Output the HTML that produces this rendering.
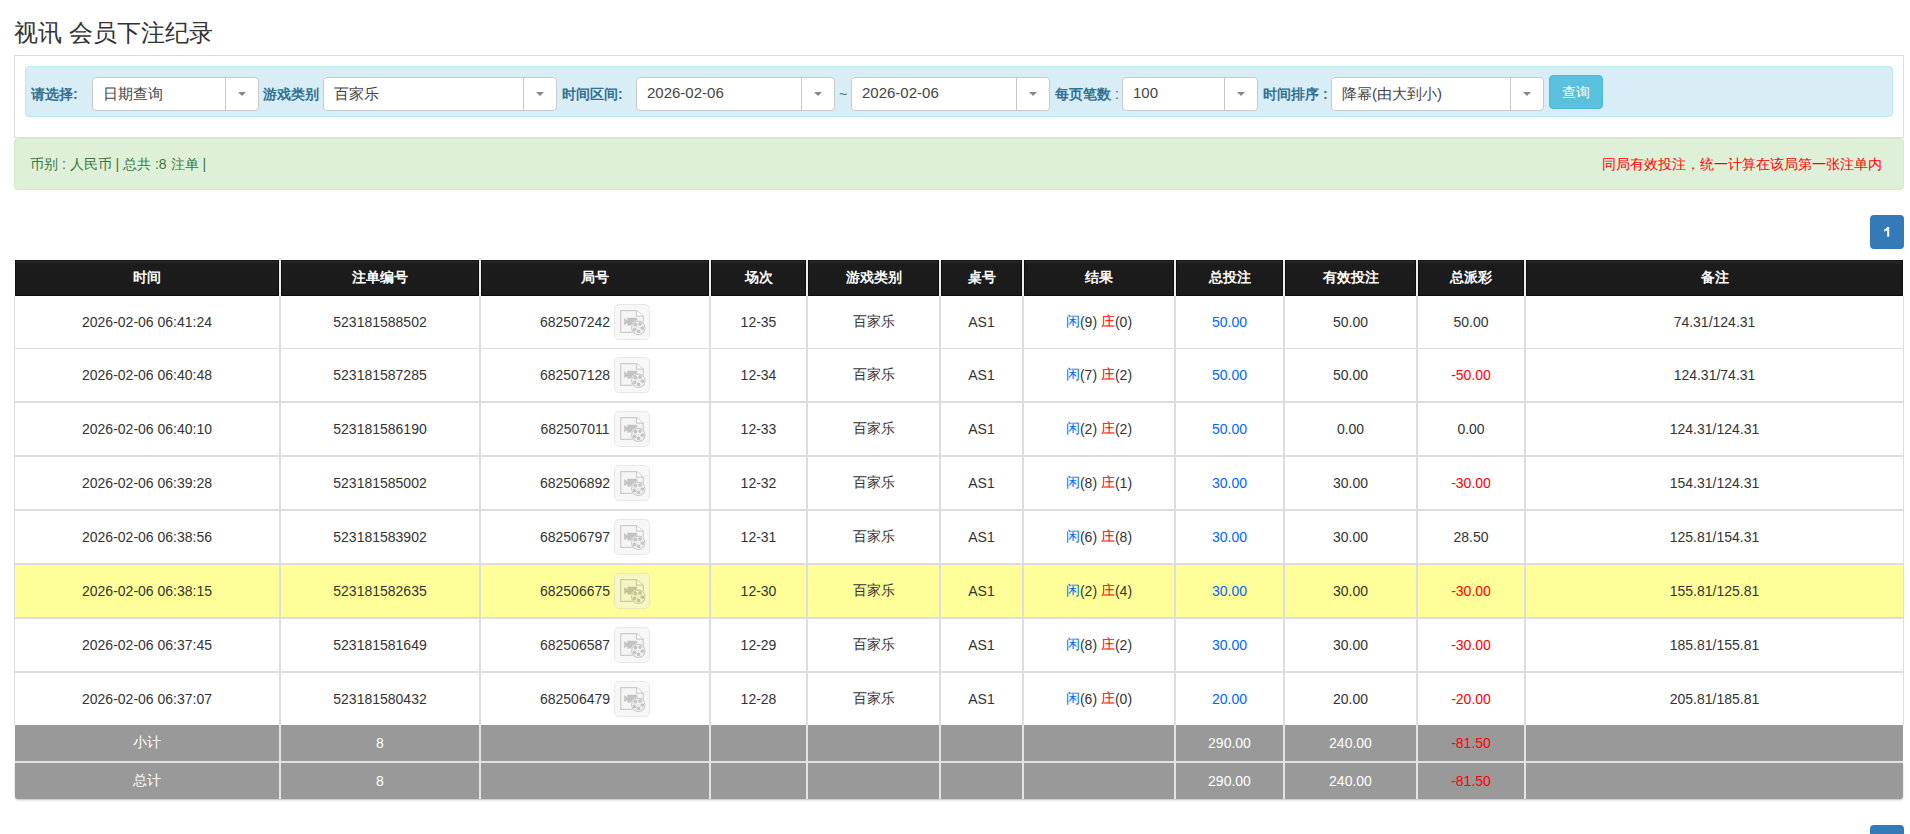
<!DOCTYPE html>
<html><head><meta charset="utf-8">
<style>
*{box-sizing:border-box}
html,body{margin:0;padding:0;background:#fff;width:1910px;height:834px;overflow:hidden}
body{font-family:"Liberation Sans",sans-serif;font-size:14px;color:#333;position:relative}
.abs{position:absolute}
.title{position:absolute;left:14px;top:17px;font-size:24px;line-height:32px;color:#333;white-space:nowrap}
.panel{position:absolute;left:14px;top:55px;width:1890px;height:83px;border:1px solid #ddd;border-bottom-color:#ddd}
.info{position:absolute;left:25px;top:66px;width:1868px;height:51px;background:#d9edf7;border:1px solid #bce8f1;border-radius:4px}
.lbl{position:absolute;top:85px;line-height:18px;font-weight:bold;color:#31708f;white-space:nowrap;font-size:14px}
.sel{position:absolute;top:77px;height:34px;background:#fff;border:1px solid #c9c9c9;border-radius:4px}
.sel .tx{position:absolute;left:10px;top:7px;line-height:18px;font-size:15px;color:#444;white-space:nowrap}
.sel .sp{position:absolute;top:0;bottom:0;width:1px;background:#c9c9c9}
.sel .ar{position:absolute;top:14px;width:0;height:0;border-left:4px solid transparent;border-right:4px solid transparent;border-top:4px solid #888}
.btn{position:absolute;left:1549px;top:75px;width:54px;height:34px;background:#5bc0de;border:1px solid #46b8da;border-radius:4px;color:#fff;font-size:14px;line-height:32px;text-align:center}
.ok{position:absolute;left:14px;top:138px;width:1890px;height:52px;background:#dff0d8;border:1px solid #d6e9c6;border-radius:4px}
.ok .l{position:absolute;left:15px;top:16px;line-height:18px;color:#3c763d;white-space:nowrap}
.ok .r{position:absolute;right:21px;top:16px;line-height:18px;color:#f00;white-space:nowrap}
.pg{position:absolute;left:1870px;width:34px;height:34px;background:#337ab7;border-radius:4px;color:#fff;font-size:14px;text-align:center;line-height:34px;-webkit-text-stroke:0.4px #fff}
.c{position:absolute;display:flex;align-items:center;justify-content:center;white-space:nowrap}
.h{color:#fff;font-weight:bold;font-size:14px}
.f{color:#fff;font-size:14px}
.bl{color:#0066ff}.rd{color:#ff0000}
.ic{display:inline-block;width:36px;height:36px;margin-left:4px;border:1px solid #d3d3d3;border-radius:5px;background:#f1f1f1;position:relative;opacity:.5}
.ic svg{position:absolute;left:-1px;top:-1px}
</style></head><body>

<div class="title">视讯 会员下注纪录</div>
<div class="panel"></div><div class="info"></div>
<div class="lbl" style="left:31px">请选择:</div>
<div class="lbl" style="left:263px">游戏类别</div>
<div class="lbl" style="left:562px">时间区间:</div>
<div class="lbl" style="left:1055px">每页笔数 <span style="font-weight:normal">:</span></div>
<div class="lbl" style="left:1263px">时间排序 :</div>
<div class="sel" style="left:92px;width:167px"><div class="tx">日期查询</div><div class="sp" style="left:132px"></div><div class="ar" style="left:145px"></div></div>
<div class="sel" style="left:323px;width:234px"><div class="tx">百家乐</div><div class="sp" style="left:199px"></div><div class="ar" style="left:212px"></div></div>
<div class="sel" style="left:636px;width:199px"><div class="tx" style="top:6px">2026-02-06</div><div class="sp" style="left:164px"></div><div class="ar" style="left:177px"></div></div>
<div class="sel" style="left:851px;width:199px"><div class="tx" style="top:6px">2026-02-06</div><div class="sp" style="left:164px"></div><div class="ar" style="left:177px"></div></div>
<div class="sel" style="left:1122px;width:136px"><div class="tx" style="top:6px">100</div><div class="sp" style="left:101px"></div><div class="ar" style="left:114px"></div></div>
<div class="sel" style="left:1331px;width:213px"><div class="tx">降幂(由大到小)</div><div class="sp" style="left:178px"></div><div class="ar" style="left:191px"></div></div>
<div class="abs" style="left:839px;top:85px;line-height:18px;color:#31708f;font-size:14px">~</div>
<div class="btn">查询</div>
<div class="ok"><div class="l">币别 : 人民币 | 总共 :8 注单 |</div><div class="r">同局有效投注，统一计算在该局第一张注单内</div></div>
<div class="pg" style="top:215px"><svg width="34" height="34" style="position:absolute;left:0;top:0"><path d="M17.2 12H19.2V21.8H17.2V15.2Q16 16.1 14.1 16.5V14.7Q16.3 13.9 17.2 12Z" fill="#fff"/></svg></div>
<div class="pg" style="top:825px"><svg width="34" height="34" style="position:absolute;left:0;top:0"><path d="M17.2 12H19.2V21.8H17.2V15.2Q16 16.1 14.1 16.5V14.7Q16.3 13.9 17.2 12Z" fill="#fff"/></svg></div>
<div class="abs" style="left:14px;top:296px;width:1px;height:429px;background:#ddd"></div>
<div class="abs" style="left:1903px;top:296px;width:1px;height:429px;background:#ddd"></div>
<div class="abs" style="left:15px;top:260px;width:1888px;height:36px;background:#1b1b1b"></div>
<div class="abs" style="left:15px;top:296px;width:1888px;height:52px;background:#fff"></div>
<div class="abs" style="left:14px;top:348px;width:1890px;height:1px;background:#ddd"></div>
<div class="abs" style="left:15px;top:349px;width:1888px;height:52px;background:#fff"></div>
<div class="abs" style="left:14px;top:401px;width:1890px;height:2px;background:#ddd"></div>
<div class="abs" style="left:15px;top:403px;width:1888px;height:52px;background:#fff"></div>
<div class="abs" style="left:14px;top:455px;width:1890px;height:2px;background:#ddd"></div>
<div class="abs" style="left:15px;top:457px;width:1888px;height:52px;background:#fff"></div>
<div class="abs" style="left:14px;top:509px;width:1890px;height:2px;background:#ddd"></div>
<div class="abs" style="left:15px;top:511px;width:1888px;height:52px;background:#fff"></div>
<div class="abs" style="left:14px;top:563px;width:1890px;height:2px;background:#ddd"></div>
<div class="abs" style="left:15px;top:565px;width:1888px;height:52px;background:#ffff99"></div>
<div class="abs" style="left:14px;top:617px;width:1890px;height:2px;background:#ddd"></div>
<div class="abs" style="left:15px;top:619px;width:1888px;height:52px;background:#fff"></div>
<div class="abs" style="left:14px;top:671px;width:1890px;height:2px;background:#ddd"></div>
<div class="abs" style="left:15px;top:673px;width:1888px;height:52px;background:#fff"></div>
<div class="abs" style="left:15px;top:725px;width:1888px;height:36px;background:#999"></div>
<div class="abs" style="left:15px;top:761px;width:1888px;height:2px;background:#e3e3e3"></div>
<div class="abs" style="left:15px;top:763px;width:1888px;height:36px;background:#999;border-radius:0 0 3px 3px;box-shadow:0 1px 2px rgba(0,0,0,.25)"></div>
<div class="abs" style="left:279px;top:260px;width:2px;height:36px;background:#eee"></div>
<div class="abs" style="left:279px;top:296px;width:2px;height:429px;background:#ddd"></div>
<div class="abs" style="left:279px;top:725px;width:2px;height:74px;background:#e3e3e3"></div>
<div class="abs" style="left:479px;top:260px;width:2px;height:36px;background:#eee"></div>
<div class="abs" style="left:479px;top:296px;width:2px;height:429px;background:#ddd"></div>
<div class="abs" style="left:479px;top:725px;width:2px;height:74px;background:#e3e3e3"></div>
<div class="abs" style="left:709px;top:260px;width:2px;height:36px;background:#eee"></div>
<div class="abs" style="left:709px;top:296px;width:2px;height:429px;background:#ddd"></div>
<div class="abs" style="left:709px;top:725px;width:2px;height:74px;background:#e3e3e3"></div>
<div class="abs" style="left:806px;top:260px;width:2px;height:36px;background:#eee"></div>
<div class="abs" style="left:806px;top:296px;width:2px;height:429px;background:#ddd"></div>
<div class="abs" style="left:806px;top:725px;width:2px;height:74px;background:#e3e3e3"></div>
<div class="abs" style="left:939px;top:260px;width:2px;height:36px;background:#eee"></div>
<div class="abs" style="left:939px;top:296px;width:2px;height:429px;background:#ddd"></div>
<div class="abs" style="left:939px;top:725px;width:2px;height:74px;background:#e3e3e3"></div>
<div class="abs" style="left:1022px;top:260px;width:2px;height:36px;background:#eee"></div>
<div class="abs" style="left:1022px;top:296px;width:2px;height:429px;background:#ddd"></div>
<div class="abs" style="left:1022px;top:725px;width:2px;height:74px;background:#e3e3e3"></div>
<div class="abs" style="left:1174px;top:260px;width:2px;height:36px;background:#eee"></div>
<div class="abs" style="left:1174px;top:296px;width:2px;height:429px;background:#ddd"></div>
<div class="abs" style="left:1174px;top:725px;width:2px;height:74px;background:#e3e3e3"></div>
<div class="abs" style="left:1283px;top:260px;width:2px;height:36px;background:#eee"></div>
<div class="abs" style="left:1283px;top:296px;width:2px;height:429px;background:#ddd"></div>
<div class="abs" style="left:1283px;top:725px;width:2px;height:74px;background:#e3e3e3"></div>
<div class="abs" style="left:1416px;top:260px;width:2px;height:36px;background:#eee"></div>
<div class="abs" style="left:1416px;top:296px;width:2px;height:429px;background:#ddd"></div>
<div class="abs" style="left:1416px;top:725px;width:2px;height:74px;background:#e3e3e3"></div>
<div class="abs" style="left:1524px;top:260px;width:2px;height:36px;background:#eee"></div>
<div class="abs" style="left:1524px;top:296px;width:2px;height:429px;background:#ddd"></div>
<div class="abs" style="left:1524px;top:725px;width:2px;height:74px;background:#e3e3e3"></div>
<div class="abs" style="left:15px;top:260px;width:264px;height:36px;border:1px solid #0e0e0e;border-top:0;background:linear-gradient(#161616 0,#161616 1px,#2a2a2a 1px,#1c1c1c 4px,#1b1b1b)"></div>
<div class="c h" style="left:15px;top:260px;width:264px;height:36px">时间</div>
<div class="abs" style="left:281px;top:260px;width:198px;height:36px;border:1px solid #0e0e0e;border-top:0;background:linear-gradient(#161616 0,#161616 1px,#2a2a2a 1px,#1c1c1c 4px,#1b1b1b)"></div>
<div class="c h" style="left:281px;top:260px;width:198px;height:36px">注单编号</div>
<div class="abs" style="left:481px;top:260px;width:228px;height:36px;border:1px solid #0e0e0e;border-top:0;background:linear-gradient(#161616 0,#161616 1px,#2a2a2a 1px,#1c1c1c 4px,#1b1b1b)"></div>
<div class="c h" style="left:481px;top:260px;width:228px;height:36px">局号</div>
<div class="abs" style="left:711px;top:260px;width:95px;height:36px;border:1px solid #0e0e0e;border-top:0;background:linear-gradient(#161616 0,#161616 1px,#2a2a2a 1px,#1c1c1c 4px,#1b1b1b)"></div>
<div class="c h" style="left:711px;top:260px;width:95px;height:36px">场次</div>
<div class="abs" style="left:808px;top:260px;width:131px;height:36px;border:1px solid #0e0e0e;border-top:0;background:linear-gradient(#161616 0,#161616 1px,#2a2a2a 1px,#1c1c1c 4px,#1b1b1b)"></div>
<div class="c h" style="left:808px;top:260px;width:131px;height:36px">游戏类别</div>
<div class="abs" style="left:941px;top:260px;width:81px;height:36px;border:1px solid #0e0e0e;border-top:0;background:linear-gradient(#161616 0,#161616 1px,#2a2a2a 1px,#1c1c1c 4px,#1b1b1b)"></div>
<div class="c h" style="left:941px;top:260px;width:81px;height:36px">桌号</div>
<div class="abs" style="left:1024px;top:260px;width:150px;height:36px;border:1px solid #0e0e0e;border-top:0;background:linear-gradient(#161616 0,#161616 1px,#2a2a2a 1px,#1c1c1c 4px,#1b1b1b)"></div>
<div class="c h" style="left:1024px;top:260px;width:150px;height:36px">结果</div>
<div class="abs" style="left:1176px;top:260px;width:107px;height:36px;border:1px solid #0e0e0e;border-top:0;background:linear-gradient(#161616 0,#161616 1px,#2a2a2a 1px,#1c1c1c 4px,#1b1b1b)"></div>
<div class="c h" style="left:1176px;top:260px;width:107px;height:36px">总投注</div>
<div class="abs" style="left:1285px;top:260px;width:131px;height:36px;border:1px solid #0e0e0e;border-top:0;background:linear-gradient(#161616 0,#161616 1px,#2a2a2a 1px,#1c1c1c 4px,#1b1b1b)"></div>
<div class="c h" style="left:1285px;top:260px;width:131px;height:36px">有效投注</div>
<div class="abs" style="left:1418px;top:260px;width:106px;height:36px;border:1px solid #0e0e0e;border-top:0;background:linear-gradient(#161616 0,#161616 1px,#2a2a2a 1px,#1c1c1c 4px,#1b1b1b)"></div>
<div class="c h" style="left:1418px;top:260px;width:106px;height:36px">总派彩</div>
<div class="abs" style="left:1526px;top:260px;width:377px;height:36px;border:1px solid #0e0e0e;border-top:0;background:linear-gradient(#161616 0,#161616 1px,#2a2a2a 1px,#1c1c1c 4px,#1b1b1b)"></div>
<div class="c h" style="left:1526px;top:260px;width:377px;height:36px">备注</div>
<div class="c" style="left:15px;top:296px;width:264px;height:52px">2026-02-06 06:41:24</div>
<div class="c" style="left:281px;top:296px;width:198px;height:52px">523181588502</div>
<div class="c" style="left:481px;top:296px;width:228px;height:52px">682507242<span class="ic"><svg width="36" height="36" viewBox="0 0 36 36"><path d="M6.7 6.7H22.5L29.3 12.2V28.3H6.7Z" fill="#ededed" stroke="#9b9b9b" stroke-width="1.2"/><path d="M22.5 6.7V12.2H29.3" fill="#fbfbfb" stroke="#9b9b9b" stroke-width="1.2"/><path d="M10.2 13.9L13.3 16.4V13.8H23.2V21.5H13.3V19L10.2 21.3Z" fill="#898989"/><circle cx="24.3" cy="23.8" r="7.6" fill="#efefef"/><circle cx="24.3" cy="23.8" r="6.7" fill="#e9e9e9" stroke="#979797" stroke-width="1.1"/><g fill="#8d8d8d"><circle cx="21.5" cy="20.7" r="1.9"/><circle cx="26" cy="20.1" r="1.9"/><circle cx="28.3" cy="24.1" r="1.9"/><circle cx="24.6" cy="27.4" r="1.9"/><circle cx="20.6" cy="25.5" r="1.9"/><circle cx="24.2" cy="23.6" r="0.6"/></g></svg>
</span></div>
<div class="c" style="left:711px;top:296px;width:95px;height:52px">12-35</div>
<div class="c" style="left:808px;top:296px;width:131px;height:52px">百家乐</div>
<div class="c" style="left:941px;top:296px;width:81px;height:52px">AS1</div>
<div class="c" style="left:1024px;top:296px;width:150px;height:52px"><span class="bl">闲</span>(9)&nbsp;<span class="rd">庄</span>(0)</div>
<div class="c" style="left:1176px;top:296px;width:107px;height:52px"><span class="bl">50.00</span></div>
<div class="c" style="left:1285px;top:296px;width:131px;height:52px">50.00</div>
<div class="c" style="left:1418px;top:296px;width:106px;height:52px">50.00</div>
<div class="c" style="left:1526px;top:296px;width:377px;height:52px">74.31/124.31</div>
<div class="c" style="left:15px;top:349px;width:264px;height:52px">2026-02-06 06:40:48</div>
<div class="c" style="left:281px;top:349px;width:198px;height:52px">523181587285</div>
<div class="c" style="left:481px;top:349px;width:228px;height:52px">682507128<span class="ic"><svg width="36" height="36" viewBox="0 0 36 36"><path d="M6.7 6.7H22.5L29.3 12.2V28.3H6.7Z" fill="#ededed" stroke="#9b9b9b" stroke-width="1.2"/><path d="M22.5 6.7V12.2H29.3" fill="#fbfbfb" stroke="#9b9b9b" stroke-width="1.2"/><path d="M10.2 13.9L13.3 16.4V13.8H23.2V21.5H13.3V19L10.2 21.3Z" fill="#898989"/><circle cx="24.3" cy="23.8" r="7.6" fill="#efefef"/><circle cx="24.3" cy="23.8" r="6.7" fill="#e9e9e9" stroke="#979797" stroke-width="1.1"/><g fill="#8d8d8d"><circle cx="21.5" cy="20.7" r="1.9"/><circle cx="26" cy="20.1" r="1.9"/><circle cx="28.3" cy="24.1" r="1.9"/><circle cx="24.6" cy="27.4" r="1.9"/><circle cx="20.6" cy="25.5" r="1.9"/><circle cx="24.2" cy="23.6" r="0.6"/></g></svg>
</span></div>
<div class="c" style="left:711px;top:349px;width:95px;height:52px">12-34</div>
<div class="c" style="left:808px;top:349px;width:131px;height:52px">百家乐</div>
<div class="c" style="left:941px;top:349px;width:81px;height:52px">AS1</div>
<div class="c" style="left:1024px;top:349px;width:150px;height:52px"><span class="bl">闲</span>(7)&nbsp;<span class="rd">庄</span>(2)</div>
<div class="c" style="left:1176px;top:349px;width:107px;height:52px"><span class="bl">50.00</span></div>
<div class="c" style="left:1285px;top:349px;width:131px;height:52px">50.00</div>
<div class="c" style="left:1418px;top:349px;width:106px;height:52px"><span class="rd">-50.00</span></div>
<div class="c" style="left:1526px;top:349px;width:377px;height:52px">124.31/74.31</div>
<div class="c" style="left:15px;top:403px;width:264px;height:52px">2026-02-06 06:40:10</div>
<div class="c" style="left:281px;top:403px;width:198px;height:52px">523181586190</div>
<div class="c" style="left:481px;top:403px;width:228px;height:52px">682507011<span class="ic"><svg width="36" height="36" viewBox="0 0 36 36"><path d="M6.7 6.7H22.5L29.3 12.2V28.3H6.7Z" fill="#ededed" stroke="#9b9b9b" stroke-width="1.2"/><path d="M22.5 6.7V12.2H29.3" fill="#fbfbfb" stroke="#9b9b9b" stroke-width="1.2"/><path d="M10.2 13.9L13.3 16.4V13.8H23.2V21.5H13.3V19L10.2 21.3Z" fill="#898989"/><circle cx="24.3" cy="23.8" r="7.6" fill="#efefef"/><circle cx="24.3" cy="23.8" r="6.7" fill="#e9e9e9" stroke="#979797" stroke-width="1.1"/><g fill="#8d8d8d"><circle cx="21.5" cy="20.7" r="1.9"/><circle cx="26" cy="20.1" r="1.9"/><circle cx="28.3" cy="24.1" r="1.9"/><circle cx="24.6" cy="27.4" r="1.9"/><circle cx="20.6" cy="25.5" r="1.9"/><circle cx="24.2" cy="23.6" r="0.6"/></g></svg>
</span></div>
<div class="c" style="left:711px;top:403px;width:95px;height:52px">12-33</div>
<div class="c" style="left:808px;top:403px;width:131px;height:52px">百家乐</div>
<div class="c" style="left:941px;top:403px;width:81px;height:52px">AS1</div>
<div class="c" style="left:1024px;top:403px;width:150px;height:52px"><span class="bl">闲</span>(2)&nbsp;<span class="rd">庄</span>(2)</div>
<div class="c" style="left:1176px;top:403px;width:107px;height:52px"><span class="bl">50.00</span></div>
<div class="c" style="left:1285px;top:403px;width:131px;height:52px">0.00</div>
<div class="c" style="left:1418px;top:403px;width:106px;height:52px">0.00</div>
<div class="c" style="left:1526px;top:403px;width:377px;height:52px">124.31/124.31</div>
<div class="c" style="left:15px;top:457px;width:264px;height:52px">2026-02-06 06:39:28</div>
<div class="c" style="left:281px;top:457px;width:198px;height:52px">523181585002</div>
<div class="c" style="left:481px;top:457px;width:228px;height:52px">682506892<span class="ic"><svg width="36" height="36" viewBox="0 0 36 36"><path d="M6.7 6.7H22.5L29.3 12.2V28.3H6.7Z" fill="#ededed" stroke="#9b9b9b" stroke-width="1.2"/><path d="M22.5 6.7V12.2H29.3" fill="#fbfbfb" stroke="#9b9b9b" stroke-width="1.2"/><path d="M10.2 13.9L13.3 16.4V13.8H23.2V21.5H13.3V19L10.2 21.3Z" fill="#898989"/><circle cx="24.3" cy="23.8" r="7.6" fill="#efefef"/><circle cx="24.3" cy="23.8" r="6.7" fill="#e9e9e9" stroke="#979797" stroke-width="1.1"/><g fill="#8d8d8d"><circle cx="21.5" cy="20.7" r="1.9"/><circle cx="26" cy="20.1" r="1.9"/><circle cx="28.3" cy="24.1" r="1.9"/><circle cx="24.6" cy="27.4" r="1.9"/><circle cx="20.6" cy="25.5" r="1.9"/><circle cx="24.2" cy="23.6" r="0.6"/></g></svg>
</span></div>
<div class="c" style="left:711px;top:457px;width:95px;height:52px">12-32</div>
<div class="c" style="left:808px;top:457px;width:131px;height:52px">百家乐</div>
<div class="c" style="left:941px;top:457px;width:81px;height:52px">AS1</div>
<div class="c" style="left:1024px;top:457px;width:150px;height:52px"><span class="bl">闲</span>(8)&nbsp;<span class="rd">庄</span>(1)</div>
<div class="c" style="left:1176px;top:457px;width:107px;height:52px"><span class="bl">30.00</span></div>
<div class="c" style="left:1285px;top:457px;width:131px;height:52px">30.00</div>
<div class="c" style="left:1418px;top:457px;width:106px;height:52px"><span class="rd">-30.00</span></div>
<div class="c" style="left:1526px;top:457px;width:377px;height:52px">154.31/124.31</div>
<div class="c" style="left:15px;top:511px;width:264px;height:52px">2026-02-06 06:38:56</div>
<div class="c" style="left:281px;top:511px;width:198px;height:52px">523181583902</div>
<div class="c" style="left:481px;top:511px;width:228px;height:52px">682506797<span class="ic"><svg width="36" height="36" viewBox="0 0 36 36"><path d="M6.7 6.7H22.5L29.3 12.2V28.3H6.7Z" fill="#ededed" stroke="#9b9b9b" stroke-width="1.2"/><path d="M22.5 6.7V12.2H29.3" fill="#fbfbfb" stroke="#9b9b9b" stroke-width="1.2"/><path d="M10.2 13.9L13.3 16.4V13.8H23.2V21.5H13.3V19L10.2 21.3Z" fill="#898989"/><circle cx="24.3" cy="23.8" r="7.6" fill="#efefef"/><circle cx="24.3" cy="23.8" r="6.7" fill="#e9e9e9" stroke="#979797" stroke-width="1.1"/><g fill="#8d8d8d"><circle cx="21.5" cy="20.7" r="1.9"/><circle cx="26" cy="20.1" r="1.9"/><circle cx="28.3" cy="24.1" r="1.9"/><circle cx="24.6" cy="27.4" r="1.9"/><circle cx="20.6" cy="25.5" r="1.9"/><circle cx="24.2" cy="23.6" r="0.6"/></g></svg>
</span></div>
<div class="c" style="left:711px;top:511px;width:95px;height:52px">12-31</div>
<div class="c" style="left:808px;top:511px;width:131px;height:52px">百家乐</div>
<div class="c" style="left:941px;top:511px;width:81px;height:52px">AS1</div>
<div class="c" style="left:1024px;top:511px;width:150px;height:52px"><span class="bl">闲</span>(6)&nbsp;<span class="rd">庄</span>(8)</div>
<div class="c" style="left:1176px;top:511px;width:107px;height:52px"><span class="bl">30.00</span></div>
<div class="c" style="left:1285px;top:511px;width:131px;height:52px">30.00</div>
<div class="c" style="left:1418px;top:511px;width:106px;height:52px">28.50</div>
<div class="c" style="left:1526px;top:511px;width:377px;height:52px">125.81/154.31</div>
<div class="c" style="left:15px;top:565px;width:264px;height:52px">2026-02-06 06:38:15</div>
<div class="c" style="left:281px;top:565px;width:198px;height:52px">523181582635</div>
<div class="c" style="left:481px;top:565px;width:228px;height:52px">682506675<span class="ic"><svg width="36" height="36" viewBox="0 0 36 36"><path d="M6.7 6.7H22.5L29.3 12.2V28.3H6.7Z" fill="#ededed" stroke="#9b9b9b" stroke-width="1.2"/><path d="M22.5 6.7V12.2H29.3" fill="#fbfbfb" stroke="#9b9b9b" stroke-width="1.2"/><path d="M10.2 13.9L13.3 16.4V13.8H23.2V21.5H13.3V19L10.2 21.3Z" fill="#898989"/><circle cx="24.3" cy="23.8" r="7.6" fill="#efefef"/><circle cx="24.3" cy="23.8" r="6.7" fill="#e9e9e9" stroke="#979797" stroke-width="1.1"/><g fill="#8d8d8d"><circle cx="21.5" cy="20.7" r="1.9"/><circle cx="26" cy="20.1" r="1.9"/><circle cx="28.3" cy="24.1" r="1.9"/><circle cx="24.6" cy="27.4" r="1.9"/><circle cx="20.6" cy="25.5" r="1.9"/><circle cx="24.2" cy="23.6" r="0.6"/></g></svg>
</span></div>
<div class="c" style="left:711px;top:565px;width:95px;height:52px">12-30</div>
<div class="c" style="left:808px;top:565px;width:131px;height:52px">百家乐</div>
<div class="c" style="left:941px;top:565px;width:81px;height:52px">AS1</div>
<div class="c" style="left:1024px;top:565px;width:150px;height:52px"><span class="bl">闲</span>(2)&nbsp;<span class="rd">庄</span>(4)</div>
<div class="c" style="left:1176px;top:565px;width:107px;height:52px"><span class="bl">30.00</span></div>
<div class="c" style="left:1285px;top:565px;width:131px;height:52px">30.00</div>
<div class="c" style="left:1418px;top:565px;width:106px;height:52px"><span class="rd">-30.00</span></div>
<div class="c" style="left:1526px;top:565px;width:377px;height:52px">155.81/125.81</div>
<div class="c" style="left:15px;top:619px;width:264px;height:52px">2026-02-06 06:37:45</div>
<div class="c" style="left:281px;top:619px;width:198px;height:52px">523181581649</div>
<div class="c" style="left:481px;top:619px;width:228px;height:52px">682506587<span class="ic"><svg width="36" height="36" viewBox="0 0 36 36"><path d="M6.7 6.7H22.5L29.3 12.2V28.3H6.7Z" fill="#ededed" stroke="#9b9b9b" stroke-width="1.2"/><path d="M22.5 6.7V12.2H29.3" fill="#fbfbfb" stroke="#9b9b9b" stroke-width="1.2"/><path d="M10.2 13.9L13.3 16.4V13.8H23.2V21.5H13.3V19L10.2 21.3Z" fill="#898989"/><circle cx="24.3" cy="23.8" r="7.6" fill="#efefef"/><circle cx="24.3" cy="23.8" r="6.7" fill="#e9e9e9" stroke="#979797" stroke-width="1.1"/><g fill="#8d8d8d"><circle cx="21.5" cy="20.7" r="1.9"/><circle cx="26" cy="20.1" r="1.9"/><circle cx="28.3" cy="24.1" r="1.9"/><circle cx="24.6" cy="27.4" r="1.9"/><circle cx="20.6" cy="25.5" r="1.9"/><circle cx="24.2" cy="23.6" r="0.6"/></g></svg>
</span></div>
<div class="c" style="left:711px;top:619px;width:95px;height:52px">12-29</div>
<div class="c" style="left:808px;top:619px;width:131px;height:52px">百家乐</div>
<div class="c" style="left:941px;top:619px;width:81px;height:52px">AS1</div>
<div class="c" style="left:1024px;top:619px;width:150px;height:52px"><span class="bl">闲</span>(8)&nbsp;<span class="rd">庄</span>(2)</div>
<div class="c" style="left:1176px;top:619px;width:107px;height:52px"><span class="bl">30.00</span></div>
<div class="c" style="left:1285px;top:619px;width:131px;height:52px">30.00</div>
<div class="c" style="left:1418px;top:619px;width:106px;height:52px"><span class="rd">-30.00</span></div>
<div class="c" style="left:1526px;top:619px;width:377px;height:52px">185.81/155.81</div>
<div class="c" style="left:15px;top:673px;width:264px;height:52px">2026-02-06 06:37:07</div>
<div class="c" style="left:281px;top:673px;width:198px;height:52px">523181580432</div>
<div class="c" style="left:481px;top:673px;width:228px;height:52px">682506479<span class="ic"><svg width="36" height="36" viewBox="0 0 36 36"><path d="M6.7 6.7H22.5L29.3 12.2V28.3H6.7Z" fill="#ededed" stroke="#9b9b9b" stroke-width="1.2"/><path d="M22.5 6.7V12.2H29.3" fill="#fbfbfb" stroke="#9b9b9b" stroke-width="1.2"/><path d="M10.2 13.9L13.3 16.4V13.8H23.2V21.5H13.3V19L10.2 21.3Z" fill="#898989"/><circle cx="24.3" cy="23.8" r="7.6" fill="#efefef"/><circle cx="24.3" cy="23.8" r="6.7" fill="#e9e9e9" stroke="#979797" stroke-width="1.1"/><g fill="#8d8d8d"><circle cx="21.5" cy="20.7" r="1.9"/><circle cx="26" cy="20.1" r="1.9"/><circle cx="28.3" cy="24.1" r="1.9"/><circle cx="24.6" cy="27.4" r="1.9"/><circle cx="20.6" cy="25.5" r="1.9"/><circle cx="24.2" cy="23.6" r="0.6"/></g></svg>
</span></div>
<div class="c" style="left:711px;top:673px;width:95px;height:52px">12-28</div>
<div class="c" style="left:808px;top:673px;width:131px;height:52px">百家乐</div>
<div class="c" style="left:941px;top:673px;width:81px;height:52px">AS1</div>
<div class="c" style="left:1024px;top:673px;width:150px;height:52px"><span class="bl">闲</span>(6)&nbsp;<span class="rd">庄</span>(0)</div>
<div class="c" style="left:1176px;top:673px;width:107px;height:52px"><span class="bl">20.00</span></div>
<div class="c" style="left:1285px;top:673px;width:131px;height:52px">20.00</div>
<div class="c" style="left:1418px;top:673px;width:106px;height:52px"><span class="rd">-20.00</span></div>
<div class="c" style="left:1526px;top:673px;width:377px;height:52px">205.81/185.81</div>
<div class="c f" style="left:15px;top:725px;width:264px;height:36px">小计</div>
<div class="c f" style="left:281px;top:725px;width:198px;height:36px">8</div>
<div class="c f" style="left:1176px;top:725px;width:107px;height:36px">290.00</div>
<div class="c f" style="left:1285px;top:725px;width:131px;height:36px">240.00</div>
<div class="c f" style="left:1418px;top:725px;width:106px;height:36px"><span class="rd">-81.50</span></div>
<div class="c f" style="left:15px;top:763px;width:264px;height:36px">总计</div>
<div class="c f" style="left:281px;top:763px;width:198px;height:36px">8</div>
<div class="c f" style="left:1176px;top:763px;width:107px;height:36px">290.00</div>
<div class="c f" style="left:1285px;top:763px;width:131px;height:36px">240.00</div>
<div class="c f" style="left:1418px;top:763px;width:106px;height:36px"><span class="rd">-81.50</span></div>
</body></html>
